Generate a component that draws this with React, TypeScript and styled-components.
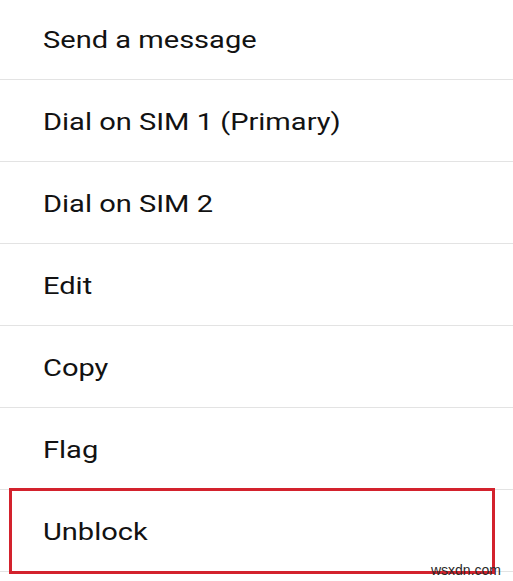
import React from 'react'
import styled, { createGlobalStyle } from 'styled-components'

const GlobalStyle = createGlobalStyle`
    html, body {
        margin: 0;
        padding: 0;
        background: #ffffff;
    }
    body {
        font-family: Roboto, "Noto Sans", "Liberation Sans", sans-serif;
    }
`

const Screen = styled.div`
    position: relative;
    width: 513px;
    height: 581px;
    overflow: hidden;
    background: #ffffff;
`

const Menu = styled.ul`
    list-style: none;
    margin: -2px 0 0 0;
    padding: 0;
`

const MenuItem = styled.li`
    display: flex;
    align-items: center;
    box-sizing: border-box;
    height: 82px;
    padding: 3px 0 0 43px;
    border-bottom: 1px solid #e3e3e3;
`

// the screenshot is stretched sideways, so the label is too
const Label = styled.span`
    display: inline-block;
    font-size: 24px;
    color: #121212;
    transform: scaleX(1.21);
    transform-origin: left center;
    white-space: nowrap;
`

const Highlight = styled.div`
    position: absolute;
    left: 9px;
    top: 488px;
    width: 480px;
    height: 80px;
    border: 3px solid #d3222d;
`

const Watermark = styled.span`
    position: absolute;
    right: 12px;
    bottom: 3px;
    font-family: "Liberation Sans", Arial, sans-serif;
    font-size: 14px;
    color: #2a2a2a;
`

const items = ['Send a message', 'Dial on SIM 1 (Primary)', 'Dial on SIM 2', 'Edit', 'Copy', 'Flag', 'Unblock']

function App(): JSX.Element {
    return (
        <>
            <GlobalStyle />
            <Screen>
                <Menu>
                    {items.map(label => (
                        <MenuItem key={label}>
                            <Label>{label}</Label>
                        </MenuItem>
                    ))}
                </Menu>
                <Highlight />
                <Watermark>wsxdn.com</Watermark>
            </Screen>
        </>
    )
}

export default App
